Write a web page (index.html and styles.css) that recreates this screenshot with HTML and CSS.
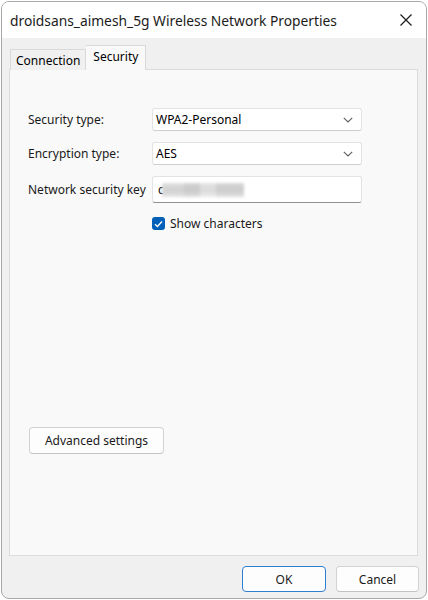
FILE: index.html
```html
<!DOCTYPE html>
<html>
<head>
<meta charset="utf-8">
<link rel="stylesheet" href="styles.css">
</head>
<body>
<div class="window">
  <div class="titlebar">
    <span class="title">droidsans_aimesh_5g Wireless Network Properties</span>
    <svg class="close" width="14" height="14" viewBox="0 0 14 14"><path d="M1.5 1.5 L12.5 12.5 M12.5 1.5 L1.5 12.5" stroke="#1b1b1b" stroke-width="1.2" fill="none"/></svg>
  </div>
  <div class="content">
    <div class="tabs">
      <div class="tab">Connection</div>
      <div class="tab active">Security</div>
    </div>
    <div class="panel">
      <div class="form">
        <div class="label">Security type:</div>
        <div class="select"><span>WPA2-Personal</span>
          <svg width="10" height="6" viewBox="0 0 10 6"><path d="M0.8 0.8 L5 5 L9.2 0.8" stroke="#5f5f5f" stroke-width="1.1" fill="none"/></svg>
        </div>
        <div class="label">Encryption type:</div>
        <div class="select"><span>AES</span>
          <svg width="10" height="6" viewBox="0 0 10 6"><path d="M0.8 0.8 L5 5 L9.2 0.8" stroke="#5f5f5f" stroke-width="1.1" fill="none"/></svg>
        </div>
        <div class="label">Network security key</div>
        <div class="input"><span class="first">c</span><span class="blur"><i class="b1"></i><i class="b2"></i><i class="b3"></i><i class="b4"></i></span></div>
        <div></div>
        <label class="check">
          <span class="box"><svg width="9" height="8" viewBox="0 0 9 8"><path d="M1 4.2 L3.4 6.5 L8 1.5" stroke="#fff" stroke-width="1.3" fill="none"/></svg></span>
          <span>Show characters</span>
        </label>
      </div>
      <button class="btn advanced">Advanced settings</button>
    </div>
    <div class="footer">
      <button class="btn ok">OK</button>
      <button class="btn">Cancel</button>
    </div>
  </div>
</div>
</body>
</html>
```

FILE: styles.css
```css
html, body {
  margin: 0;
  padding: 0;
  background: #ffffff;
}
body {
  font-family: "Noto Sans", "Open Sans", sans-serif;
  color: #1a1a1a;
}
.window {
  width: 424px;
  height: 596px;
  margin: 1px 1px;
  border: 1px solid #a8a8a8;
  border-radius: 8px;
  overflow: hidden;
  display: flex;
  flex-direction: column;
  background: #f0f0f0;
}
.titlebar {
  height: 36px;
  flex: none;
  background: #ffffff;
  display: flex;
  align-items: center;
  justify-content: space-between;
  padding: 0 13px 0 8px;
}
.title {
  font-size: 13.8px;
  color: #1b1b1b;
  margin-top: 0;
}
.close {
  display: block;
}
.content {
  flex: 1;
  display: flex;
  flex-direction: column;
  padding: 7px 8px 0 7px;
}
.tabs {
  display: flex;
  align-items: flex-end;
  height: 24px;
  padding-left: 1px;
  position: relative;
  z-index: 1;
}
.tab {
  font-size: 12px;
  color: #000;
  height: 21px;
  line-height: 21px;
  padding: 0 5px 0 5px;
  border: 1px solid #d9d9d9;
  border-bottom: none;
  background: #f0f0f0;
  box-sizing: border-box;
  margin-bottom: -1px;
}
.tab.active {
  height: 25px;
  line-height: 21px;
  background: #f9f9f9;
  border-left: none;
  padding: 0 7px;
}
.panel {
  height: 487px;
  box-sizing: border-box;
  background: #f9f9f9;
  border: 1px solid #dcdcdc;
  padding: 38px 18px 101px 18px;
  display: flex;
  flex-direction: column;
  align-items: flex-start;
}
.form {
  display: grid;
  grid-template-columns: 124px 210px;
  row-gap: 11px;
  align-items: center;
  font-size: 12px;
  color: #1a1a1a;
}
.label {
  font-size: 12px;
}
.select {
  height: 23px;
  box-sizing: border-box;
  background: #fff;
  border: 1px solid #e3e3e3;
  border-bottom-color: #cfcfcf;
  border-radius: 3px;
  display: flex;
  align-items: center;
  justify-content: space-between;
  padding: 0 8px 0 3px;
  font-size: 12px;
  color: #000;
}
.input {
  height: 27px;
  box-sizing: border-box;
  background: #fff;
  border: 1px solid #e3e3e3;
  border-bottom: 1px solid #8f8f8f;
  border-radius: 3px;
  display: flex;
  align-items: center;
  padding: 0 5px;
  font-size: 12px;
  color: #000;
}
.first {
  margin-right: -2px;
}
.blur {
  display: flex;
  height: 14px;
  filter: blur(1.5px);
}
.blur i {
  display: block;
  height: 14px;
}
.b1 { width: 22px; background: linear-gradient(#e0e0e0, #cfcfcf 50%, #e4e4e4); }
.b2 { width: 16px; background: linear-gradient(#d4d4d4, #c8c8c8 50%, #dedede); }
.b3 { width: 16px; background: linear-gradient(#e4e4e4, #dadada 50%, #ebebeb); }
.b4 { width: 28px; background: linear-gradient(#d6d6d6, #cbcbcb 50%, #e0e0e0); }
.check {
  display: flex;
  align-items: center;
  gap: 5px;
  font-size: 12px;
  color: #1a1a1a;
  margin-top: 1px;
}
.box {
  width: 13px;
  height: 13px;
  border-radius: 3px;
  background: #005fb8;
  display: flex;
  align-items: center;
  justify-content: center;
}
.box svg { display: block; }
.btn {
  font-family: "Noto Sans", "Open Sans", sans-serif;
  font-size: 12px;
  color: #1a1a1a;
  background: #fdfdfd;
  border: 1px solid #d2d2d2;
  border-bottom-color: #c2c2c2;
  border-radius: 4px;
  height: 26px;
  padding: 0;
}
.advanced {
  margin-top: auto;
  width: 135px;
  height: 27px;
  margin-left: 1px;
}
.footer {
  display: flex;
  justify-content: flex-end;
  gap: 10px;
  padding: 10px 0 0 0;
  margin-right: -1px;
}
.footer .btn {
  width: 83px;
}
.footer .ok {
  width: 84px;
  border: 1px solid #2d7fd0;
}
```
